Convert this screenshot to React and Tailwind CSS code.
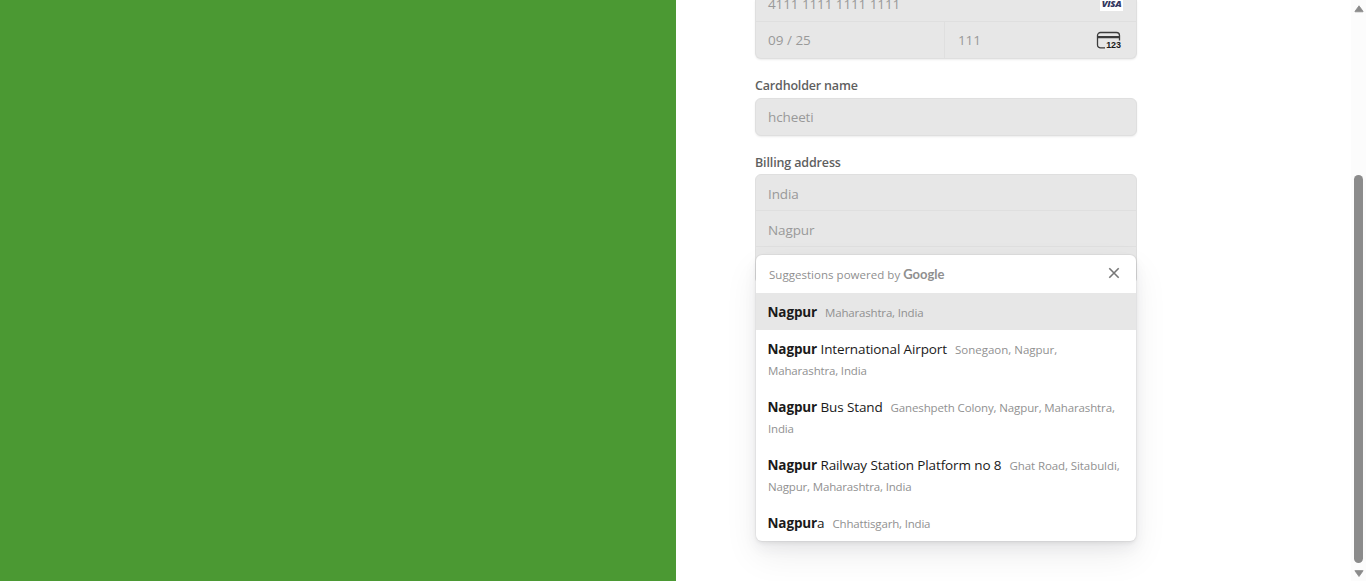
import React from "react";

const suggestions = [
  { match: "Nagpur", rest: "", lines: ["Maharashtra, India"], active: true },
  { match: "Nagpur", rest: " International Airport", lines: ["Sonegaon, Nagpur,", "Maharashtra, India"], tracking: "tracking-[0px]" },
  { match: "Nagpur", rest: " Bus Stand", lines: ["Ganeshpeth Colony, Nagpur, Maharashtra,", "India"], tracking: "tracking-[-0.13px]" },
  { match: "Nagpur", rest: " Railway Station Platform no 8", lines: ["Ghat Road, Sitabuldi,", "Nagpur, Maharashtra, India"], tracking: "tracking-[-0.08px]" },
  { match: "Nagpur", rest: "a", lines: ["Chhattisgarh, India"] },
];

function VisaLogo() {
  return (
    <span className="flex h-4 w-[23px] items-center justify-center bg-white pt-0.5 font-[Open_Sans] text-[9.5px] font-extrabold italic leading-none tracking-[-0.3px] text-[#333760]">
      VISA
    </span>
  );
}

function CvcIcon() {
  return (
    <svg width="26" height="20" viewBox="0 0 26 20" fill="none">
      <path d="M9 16.9H4.5a3 3 0 0 1-3-3V4.5a3 3 0 0 1 3-3h16a3 3 0 0 1 3 3v5" stroke="#3c3c3c" strokeWidth="1.3" />
      <path d="M1.5 6.2h22" stroke="#3c3c3c" strokeWidth="2.2" />
      <text x="10.2" y="17" textLength="14.6" lengthAdjust="spacingAndGlyphs" fontFamily="Liberation Sans" fontWeight="700" fontSize="8.5" fill="#1a1a1a">123</text>
    </svg>
  );
}

function Suggestion({ match, rest, lines, active, tracking = "tracking-[-0.18px]" }) {
  return (
    <div className={active ? "bg-[#e7e7e7] px-3 py-2" : "px-3 py-2"}>
      <div className="flex h-[21px] items-baseline whitespace-pre pt-px leading-[21px]">
        <span className="-ml-px text-[13.5px] leading-[21px] tracking-[-0.12px] text-[#1a1a1a]">
          <b className="ml-[0.5px] font-bold">{match}</b>{rest}
        </span>
        <span className={`ml-2 text-[11.5px] leading-[21px] text-[#919191] ${tracking}`}>{lines[0]}</span>
      </div>
      {lines[1] && <div className="h-[21px] whitespace-pre pt-px text-[11.5px] leading-[21px] tracking-[-0.16px] text-[#919191]">{lines[1]}</div>}
    </div>
  );
}

function Scrollbar() {
  return (
    <div className="flex h-full w-[15px] flex-col items-center bg-[#fcfcfc] pt-[5px]">
      <svg width="10" height="8" viewBox="0 0 10 8"><path d="M5 .8 9 6.3Q9.3 6.8 8.7 6.8H1.3Q.7 6.8 1 6.3Z" fill="#8b8b8b" stroke="#8b8b8b" strokeWidth=".8" /></svg>
      <div className="mt-[162px] h-[388px] w-[9px] rounded-full bg-[#8b8b8b]" />
      <svg className="mt-[7px]" width="10" height="8" viewBox="0 0 10 8"><path d="M5 6.5 9 .9Q9.3.4 8.7.4H1.3Q.7.4 1 .9Z" fill="#8b8b8b" stroke="#8b8b8b" strokeWidth=".8" /></svg>
    </div>
  );
}

export default function App() {
  return (
    <div className="flex h-[581px] w-[1366px] overflow-hidden bg-white font-['Open_Sans','Noto_Sans',sans-serif]">
      <div className="w-[676px] bg-[#4b9933]" />
      <main className="h-full flex-1 overflow-hidden pl-[79px]">
        <div className="w-[382px] text-[13.5px] tracking-[-0.12px] text-[#999999]">
          <div className="h-[59px] overflow-hidden rounded-b-md border border-t-0 border-[#dfdfdf] bg-[#e7e7e7] shadow-[0_1px_2px_rgba(0,0,0,0.08)]">
            <div className="flex h-[22px] justify-between border-b border-[#dfdfdf] pl-3 pr-[13px]">
              <span className="-mt-[7px] leading-[22px] tracking-[-0.1px]">4111 1111 1111 1111</span>
              <div className="-mt-[5px]"><VisaLogo /></div>
            </div>
            <div className="flex h-9">
              <div className="flex w-[189px] items-center border-r border-[#dfdfdf] pl-3"><span className="tracking-[0px]">09 / 25</span></div>
              <div className="flex flex-1 items-center justify-between pl-[13px] pr-[14px]"><span className="tracking-[-0.1px]">111</span><span className="pt-px"><CvcIcon /></span></div>
            </div>
          </div>

          <div className="mt-[17px] h-[22px] text-[12.5px] font-semibold leading-[20px] tracking-[-0.18px] text-[#5f5f5f]"><span>Cardholder name</span></div>
          <div className="flex h-[38px] items-center rounded-md border border-[#dfdfdf] bg-[#e7e7e7] pl-3 shadow-[0_1px_2px_rgba(0,0,0,0.08)]"><span>hcheeti</span></div>

          <div className="mt-[17px] h-[21px] text-[12.5px] font-semibold leading-[20px] tracking-[-0.14px] text-[#5f5f5f]"><span>Billing address</span></div>
          <div className="relative h-[110px] rounded-md border border-[#dfdfdf] bg-[#e7e7e7]">
            <div className="flex h-9 items-center border-b border-[#dfdfdf] pl-3 pt-[3px]"><span>India</span></div>
            <div className="flex h-9 items-center border-b border-[#dfdfdf] pl-3 pt-[3px]"><span>Nagpur</span></div>

            <div className="absolute left-0 top-20 w-[380px] overflow-visible rounded-md bg-white shadow-[0_0_0_1px_rgba(0,0,0,0.03),0_2px_4px_rgba(0,0,0,0.07),0_7px_14px_rgba(50,50,93,0.06),0_15px_35px_rgba(0,0,0,0.07)]">
              <div className="flex h-[38px] items-center justify-between pl-[13px] pr-4 text-[11.5px] tracking-[0.03px] text-[#8f8f8f]">
                <div className="flex items-baseline whitespace-pre pt-0.5">
                  <span>Suggestions powered by </span>
                  <span className="font-['Lato'] text-[13px] font-bold tracking-normal">Google</span>
                </div>
                <svg className="-mt-0.5" width="12" height="12" viewBox="0 0 12 12"><path d="M1.3 1.3 10.7 10.7M10.7 1.3 1.3 10.7" stroke="#777777" strokeWidth="1.6" /></svg>
              </div>
              {suggestions.map((s, i) => <Suggestion key={i} {...s} />)}
            </div>
          </div>
        </div>
      </main>
      <Scrollbar />
    </div>
  );
}
